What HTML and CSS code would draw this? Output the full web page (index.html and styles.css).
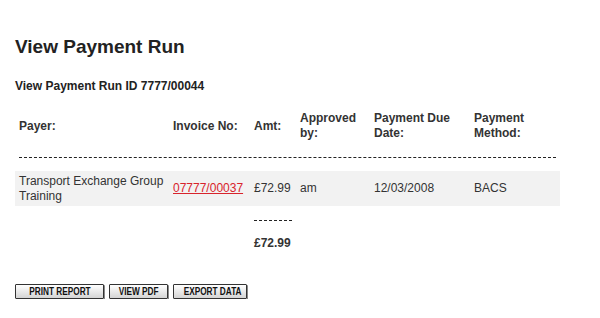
FILE: index.html
```html
<!DOCTYPE html>
<html lang="en">
<head>
  <meta charset="UTF-8">
  <title>View Payment Run</title>
  <link rel="stylesheet" href="styles.css">
</head>
<body>
  <div id="page">
    <h1 class="pageTitle">View Payment Run</h1>
    <h2 class="runTitle">View Payment Run ID 7777/00044</h2>

    <table class="runTable">
      <colgroup>
        <col class="colPayer">
        <col class="colInvoice">
        <col class="colAmt">
        <col class="colApproved">
        <col class="colDue">
        <col class="colMethod">
      </colgroup>
      <tr class="headRow">
        <th>Payer:</th>
        <th>Invoice No:</th>
        <th>Amt:</th>
        <th>Approved by:</th>
        <th>Payment Due Date:</th>
        <th>Payment Method:</th>
      </tr>
      <tr class="ruleRow">
        <td colspan="6"><div class="dashes"></div></td>
      </tr>
      <tr class="dataRow">
        <td>Transport Exchange Group Training</td>
        <td><a href="#">07777/00037</a></td>
        <td>&pound;72.99</td>
        <td>am</td>
        <td>12/03/2008</td>
        <td>BACS</td>
      </tr>
      <tr class="sumRule">
        <td></td><td></td>
        <td><div class="dashes"></div></td>
        <td></td><td></td><td></td>
      </tr>
      <tr class="totalRow">
        <td></td><td></td>
        <td>&pound;72.99</td>
        <td></td><td></td><td></td>
      </tr>
    </table>

    <div class="buttons">
      <button class="btn btnPrint"><span>PRINT REPORT</span></button>
      <button class="btn btnPdf"><span>VIEW PDF</span></button>
      <button class="btn btnExport"><span>EXPORT DATA</span></button>
    </div>
  </div>
</body>
</html>
```
FILE: styles.css
```css
body {
  margin: 0;
  padding: 0;
  background: #fff;
  color: #333;
  font-family: "Liberation Sans", Arial, sans-serif;
  font-size: 12px;
}
#page {
  padding: 37px 0 0 15px;
}
.pageTitle {
  margin: 0;
  font-size: 19px;
  line-height: 20px;
  color: #222;
}
.runTitle {
  margin: 22px 0 0 0;
  font-size: 12px;
  line-height: 14px;
  color: #222;
}
.runTable {
  margin-top: 17px;
  width: 545px;
  border-collapse: collapse;
  table-layout: fixed;
}
.colPayer { width: 154px; }
.colInvoice { width: 81px; }
.colAmt { width: 46px; }
.colApproved { width: 74px; }
.colDue { width: 100px; }
.colMethod { width: 90px; }
.runTable th,
.runTable td {
  padding: 0 4px;
  text-align: left;
  vertical-align: middle;
  line-height: 15px;
}
.runTable th {
  font-weight: bold;
  color: #333;
  height: 32px;
}
.ruleRow td {
  padding: 15px 4px 13px 4px;
}
.dashes {
  height: 0;
  border-top: 1px dashed #222;
}
.dataRow td {
  background: #f2f2f2;
  height: 35px;
  padding-top: 0;
  padding-bottom: 0;
}
.dataRow a {
  color: #d8242c;
  text-decoration: underline;
}
.sumRule td {
  padding: 14px 4px 8px 4px;
}
.totalRow td {
  font-weight: bold;
  height: 29px;
}
.buttons {
  margin-top: 26px;
  display: flex;
  gap: 5px;
}
.btn {
  height: 15px;
  padding: 0;
  border: 1px solid #333;
  border-radius: 1px;
  background: linear-gradient(#ffffff, #d4d4d4);
  box-shadow: 1px 1px 0 #888;
  font-family: "Liberation Sans", Arial, sans-serif;
  font-weight: bold;
  font-size: 11px;
  line-height: 13px;
  color: #111;
  white-space: nowrap;
  overflow: hidden;
}
.btn span {
  display: inline-block;
  transform: scaleX(0.75);
}
.btnPrint { width: 89px; }
.btnPdf { width: 59px; }
.btnExport { width: 74px; }
```
